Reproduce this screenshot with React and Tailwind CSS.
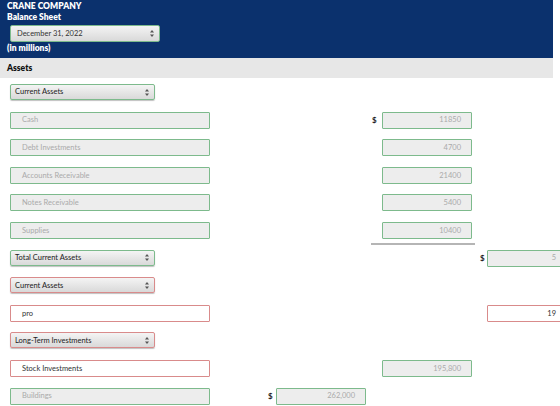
import React from "react";

const font = { fontFamily: "Lato, 'Open Sans', sans-serif" };

function Arrows() {
  return (
    <svg width="4" height="7" viewBox="0 0 4 7" className="shrink-0">
      <path d="M2 0 L4 2.6 L0 2.6 Z" fill="#555" />
      <path d="M2 7 L4 4.4 L0 4.4 Z" fill="#555" />
    </svg>
  );
}

function Select({ text, red, w = "w-[145px]" }) {
  return (
    <div
      className={`${w} h-[16px] rounded-[2px] border flex items-center justify-between pl-[4px] pr-[5px] text-[7.5px] text-[#222] bg-gradient-to-b from-[#f4f4f4] to-[#d9d9d9] shadow-[0_1px_1px_rgba(0,0,0,0.25)] ${
        red ? "border-[#d98b8b]" : "border-[#7dba8c]"
      }`}
    >
      <span>{text}</span>
      <Arrows />
    </div>
  );
}

function Field({ text, red, right, dark, w = "w-[200px]" }) {
  return (
    <div
      className={`${w} h-[17px] border rounded-[1px] flex items-center text-[7.5px] ${
        right ? "justify-end pr-[10px]" : "pl-[11px]"
      } ${red ? "border-[#d98b8b] bg-white" : "border-[#7dba8c] bg-[#ededed]"} ${
        dark ? "text-[#333]" : "text-[#aaa]"
      }`}
    >
      {text}
    </div>
  );
}

function Dollar() {
  return (
    <div className="h-[17px] flex items-center text-[8px] font-bold text-[#222]">$</div>
  );
}

function Row({ left, c2, c3, c4, line }) {
  return (
    <div className="h-[27.6px] flex items-start">
      <div className="w-[258px] pl-[10px] shrink-0">{left}</div>
      <div className="w-[114px] shrink-0 flex items-start">
        {c2 ? (
          <>
            <div className="w-[18px] pl-[10px]"><Dollar /></div>
            <div>{c2}</div>
          </>
        ) : null}
      </div>
      <div className="w-[108px] shrink-0 flex items-start relative">
        {c3 ? (
          <>
            <div className="w-[10px]">{c3.dollar ? <Dollar /> : null}</div>
            <div>{c3.el}</div>
          </>
        ) : null}
        {line ? (
          <div className="absolute left-[-1px] top-[21px] w-[104px] h-[2px] bg-[#b5b5b5]" />
        ) : null}
      </div>
      <div className="flex-1 flex items-start">
        {c4 ? (
          <>
            <div className="w-[7px]">{c4.dollar ? <Dollar /> : null}</div>
            <div>{c4.el}</div>
          </>
        ) : null}
      </div>
    </div>
  );
}

export default function App() {
  return (
    <div className="w-[560px] h-[406px] overflow-hidden bg-white" style={font}>
      <div className="w-[553px] bg-[#0b316d] text-white px-[7px] pt-[1px] pb-[4px] leading-[11px] font-extrabold text-[8.5px]">
        <div>CRANE COMPANY</div>
        <div>Balance Sheet</div>
        <div className="ml-[3px] mt-[2px] mb-[1px] font-normal">
          <div className="w-[150px] h-[17px] rounded-[2px] border border-[#7dba8c] flex items-center justify-between pl-[6px] pr-[5px] text-[7.5px] text-[#333] bg-gradient-to-b from-[#f4f4f4] to-[#d9d9d9]">
            <span>December 31, 2022</span>
            <Arrows />
          </div>
        </div>
        <div>(in millions)</div>
      </div>
      <div className="w-[553px] h-[20px] bg-[#e7e7e7] flex items-center pl-[7px] font-extrabold text-[8.5px] text-[#111]">
        Assets
      </div>
      <div className="pt-[6px]">
        <Row left={<Select text="Current Assets" />} />
        <Row left={<Field text="Cash" />} c3={{ dollar: true, el: <Field text="11850" right w="w-[90px]" /> }} />
        <Row left={<Field text="Debt Investments" />} c3={{ el: <Field text="4700" right w="w-[90px]" /> }} />
        <Row left={<Field text="Accounts Receivable" />} c3={{ el: <Field text="21400" right w="w-[90px]" /> }} />
        <Row left={<Field text="Notes Receivable" />} c3={{ el: <Field text="5400" right w="w-[90px]" /> }} />
        <Row left={<Field text="Supplies" />} c3={{ el: <Field text="10400" right w="w-[90px]" /> }} line />
        <Row left={<Select text="Total Current Assets" />} c4={{ dollar: true, el: <Field text="5" right w="w-[80px]" /> }} />
        <Row left={<Select text="Current Assets" red />} />
        <Row left={<Field text="pro" red dark />} c4={{ el: <Field text="19" red dark right w="w-[80px]" /> }} />
        <Row left={<Select text="Long-Term Investments" red />} />
        <Row left={<Field text="Stock Investments" red dark />} c3={{ el: <Field text="195,800" right w="w-[90px]" /> }} />
        <Row left={<Field text="Buildings" />} c2={<Field text="262,000" right w="w-[90px]" />} />
      </div>
    </div>
  );
}
